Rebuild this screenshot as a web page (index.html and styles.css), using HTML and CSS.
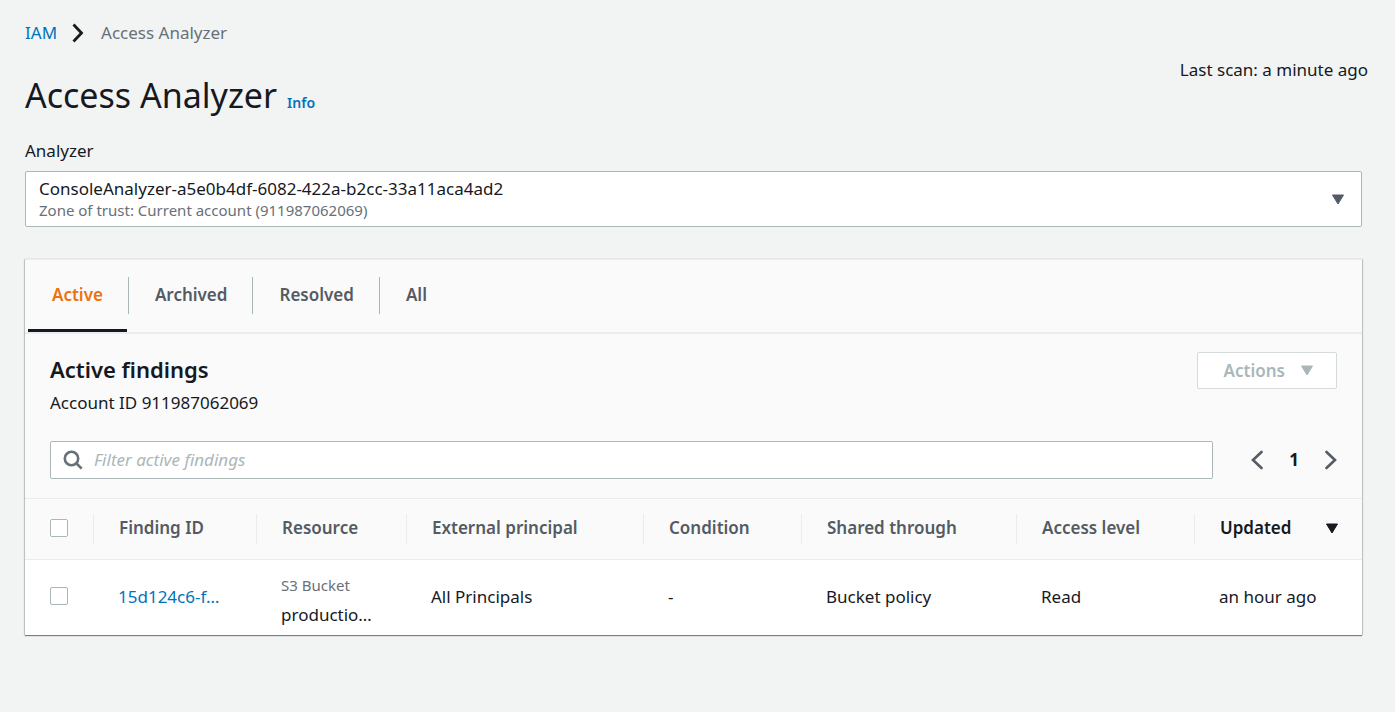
FILE: index.html
```html
<!DOCTYPE html>
<html lang="en">
<head>
<meta charset="utf-8">
<meta name="viewport" content="width=device-width, initial-scale=1">
<title>Access Analyzer</title>
<link rel="stylesheet" href="styles.css">
</head>
<body>
<main class="page">
  <header class="page-header">
    <div class="page-heading">
      <nav class="breadcrumb" aria-label="Breadcrumb">
        <a class="link" href="#iam">IAM</a>
        <svg class="breadcrumb-arrow" width="12" height="20" viewBox="0 0 12 20" aria-hidden="true"><path d="M1.500 1.500 9.500 10l-8 8.500" fill="none" stroke="#16191f" stroke-width="2.800"/></svg>
        <span aria-current="page">Access Analyzer</span>
      </nav>
      <div class="title-row">
        <h1 class="title">Access Analyzer</h1>
        <a class="info link" href="#info">Info</a>
      </div>
    </div>
    <p class="last-scan">Last scan: a minute ago</p>
  </header>

  <div class="content">
    <div class="field">
      <label class="field-label" for="analyzer">Analyzer</label>
      <div class="picker">
        <select class="picker-select" id="analyzer" aria-describedby="analyzer-zone">
          <option>ConsoleAnalyzer-a5e0b4df-6082-422a-b2cc-33a11aca4ad2</option>
        </select>
        <span class="picker-note" id="analyzer-zone">Zone of trust: Current account (911987062069)</span>
        <svg class="picker-caret" width="14" height="11" viewBox="0 0 14 11" aria-hidden="true"><path d="M1.500 1h11L7 10z" fill="#545b64" stroke="#545b64" stroke-linejoin="round"/></svg>
      </div>
    </div>

    <section class="panel">
      <div class="tabs" role="tablist">
        <div class="tab-item"><button class="tab tab-active" type="button" role="tab" aria-selected="true">Active</button></div>
        <div class="tab-item"><button class="tab" type="button" role="tab" aria-selected="false">Archived</button></div>
        <div class="tab-item"><button class="tab" type="button" role="tab" aria-selected="false">Resolved</button></div>
        <div class="tab-item"><button class="tab" type="button" role="tab" aria-selected="false">All</button></div>
      </div>

      <div class="panel-header">
        <div>
          <h2 class="panel-title">Active findings</h2>
          <p class="panel-note">Account ID 911987062069</p>
        </div>
        <button class="actions" type="button" disabled>
          Actions
          <svg width="14" height="11" viewBox="0 0 14 11" aria-hidden="true"><path d="M1.500 1h11L7 10z" fill="#aab7b8" stroke="#aab7b8" stroke-linejoin="round"/></svg>
        </button>
      </div>

      <div class="toolbar">
        <div class="search">
          <svg class="search-icon" width="20" height="20" viewBox="0 0 20 20" aria-hidden="true"><g fill="none" stroke="#687078" stroke-width="2.600"><circle cx="8.500" cy="8.500" r="6.700"/><path d="m13 13 5.700 5.700"/></g></svg>
          <input class="search-input" type="search" placeholder="Filter active findings" aria-label="Filter active findings">
        </div>
        <nav class="pager" aria-label="Pages">
          <button class="pager-button" type="button" aria-label="Previous page"><svg width="12" height="20" viewBox="0 0 12 20" aria-hidden="true"><path d="M10.500 2 2 10l8.500 8" fill="none" stroke="#545b64" stroke-width="2.600" stroke-linecap="round"/></svg></button>
          <span class="pager-current" aria-current="page">1</span>
          <button class="pager-button" type="button" aria-label="Next page"><svg width="12" height="20" viewBox="0 0 12 20" aria-hidden="true"><path d="M1.500 2 10 10l-8.500 8" fill="none" stroke="#545b64" stroke-width="2.600" stroke-linecap="round"/></svg></button>
        </nav>
      </div>

      <table class="findings">
        <colgroup>
          <col class="col-check"><col class="col-id"><col class="col-resource"><col class="col-principal"><col class="col-condition"><col class="col-shared"><col class="col-level"><col class="col-updated">
        </colgroup>
        <thead>
          <tr>
            <th class="check-cell"><input class="check" type="checkbox" aria-label="Select all findings"></th>
            <th scope="col">Finding ID</th>
            <th scope="col">Resource</th>
            <th scope="col">External principal</th>
            <th scope="col">Condition</th>
            <th scope="col">Shared through</th>
            <th scope="col">Access level</th>
            <th class="sorted" scope="col" aria-sort="descending">
              <div class="sort">Updated <svg width="14" height="11" viewBox="0 0 14 11" aria-hidden="true"><path d="M1.500 1h11L7 10z" fill="#16191f" stroke="#16191f" stroke-linejoin="round"/></svg></div>
            </th>
          </tr>
        </thead>
        <tbody>
          <tr>
            <td class="check-cell"><input class="check" type="checkbox" aria-label="Select finding 15d124c6"></td>
            <td><a class="link" href="#finding">15d124c6-f…</a></td>
            <td><div class="resource-type">S3 Bucket</div><div class="resource-name">productio…</div></td>
            <td>All Principals</td>
            <td>-</td>
            <td>Bucket policy</td>
            <td>Read</td>
            <td>an hour ago</td>
          </tr>
        </tbody>
      </table>
    </section>
  </div>
</main>
</body>
</html>
```
FILE: styles.css
```css
* {
  box-sizing: border-box;
}

body {
  margin: 0;
  background: #f2f4f4;
  color: #16191f;
  font: 17px/24px "Noto Sans", "Open Sans", sans-serif;
}

h1, h2, p {
  margin: 0;
}

button, input, select {
  font: inherit;
}

.link {
  color: #0073bb;
  text-decoration: none;
}

.page {
  padding: 21px 27px 24px 25px;
}

.page-header {
  display: flex;
  justify-content: space-between;
}

.breadcrumb {
  display: flex;
  align-items: center;
  color: #687078;
}

.breadcrumb-arrow {
  margin: 0 17px 0 15px;
}

.title-row {
  display: flex;
  align-items: baseline;
  gap: 10px;
  margin-top: 28px;
}

.title {
  font-size: 34px;
  line-height: 44px;
  font-weight: 400;
}

.info {
  font-size: 14px;
  font-weight: 600;
}

.last-scan {
  padding-top: 37px;
}

.content {
  padding-right: 6px;
}

.field {
  margin-top: 22px;
}

.field-label {
  display: block;
  margin-bottom: 8px;
}

.picker {
  position: relative;
}

.picker-select {
  display: block;
  width: 100%;
  height: 56px;
  padding: 0 48px 20px 13px;
  appearance: none;
  border: 1px solid #aab7b8;
  border-radius: 2px;
  background: #fff;
  color: #16191f;
}

.picker-note {
  position: absolute;
  left: 14px;
  bottom: 7px;
  color: #687078;
  font-size: 15px;
  line-height: 20px;
  pointer-events: none;
}

.picker-caret {
  position: absolute;
  right: 17px;
  top: 23px;
  pointer-events: none;
}

.panel {
  margin-top: 32px;
  background: #fff;
  border-top: 1px solid #eaeded;
  box-shadow: 0 1px 1px rgba(0, 28, 36, 0.5), 1px 0 1px rgba(0, 28, 36, 0.15), -1px 0 1px rgba(0, 28, 36, 0.15);
}

.tabs {
  display: flex;
  padding-left: 1px;
  background: #fafafa;
  border-bottom: 2px solid #eaeded;
}

.tab-item {
  padding: 0 2px;
  background: linear-gradient(#aab7b8, #aab7b8) right 17px / 1px 37px no-repeat;
}

.tab-item:last-child {
  background: none;
}

.tab {
  height: 72px;
  padding: 0 24px 2px;
  border: 0;
  border-top: 3px solid transparent;
  border-bottom: 3px solid transparent;
  background: none;
  color: #545b64;
  font-weight: 600;
}

.tab-active {
  border-bottom-color: #16191f;
  color: #ec7211;
}

.panel-header {
  display: flex;
  align-items: flex-start;
  justify-content: space-between;
  padding: 18px 25px 0;
  background: #fafafa;
}

.panel-title {
  font-size: 22px;
  line-height: 34px;
  font-weight: 600;
}

.panel-note {
  margin-top: 5px;
}

.actions {
  display: flex;
  align-items: center;
  gap: 15px;
  height: 37px;
  padding: 0 22px 0 26px;
  border: 1px solid #d5dbdb;
  border-radius: 2px;
  background: #fff;
  color: #aab7b8;
  font-weight: 600;
}

.toolbar {
  display: flex;
  align-items: center;
  gap: 38px;
  padding: 26px 25px 19px;
  background: #fafafa;
}

.search {
  display: flex;
  flex: 1;
  align-items: center;
  gap: 11px;
  height: 38px;
  padding: 0 12px;
  border: 1px solid #aab7b8;
  border-radius: 2px;
  background: #fff;
}

.search-input {
  flex: 1;
  min-width: 0;
  padding: 0;
  border: 0;
  outline: 0;
  background: none;
  color: #16191f;
}

.search-input::placeholder {
  color: #aab7b8;
  font-style: italic;
}

.pager {
  display: flex;
  align-items: center;
  gap: 26px;
}

.pager-button {
  display: flex;
  padding: 0;
  border: 0;
  background: none;
}

.pager-current {
  font-weight: 700;
}

.findings {
  width: 100%;
  table-layout: fixed;
  border-collapse: collapse;
  text-align: left;
}

.col-check { width: 68px; }
.col-id { width: 163px; }
.col-resource { width: 150px; }
.col-principal { width: 237px; }
.col-condition { width: 158px; }
.col-shared { width: 215px; }
.col-level { width: 178px; }
.col-updated { width: 168px; }

.findings th {
  height: 61px;
  padding: 0 0 2px 26px;
  border-top: 1px solid #eaeded;
  border-bottom: 1px solid #eaeded;
  background: linear-gradient(#eaeded, #eaeded) left center / 1px 30px no-repeat #fafafa;
  color: #545b64;
  font-weight: 600;
  white-space: nowrap;
}

.findings td {
  height: 75px;
  padding: 0 0 0 25px;
  white-space: nowrap;
}

.findings .check-cell {
  padding: 0 0 3px 25px;
  background-image: none;
}

.findings .sorted {
  padding-right: 23px;
  color: #16191f;
}

.sort {
  display: flex;
  align-items: center;
  justify-content: space-between;
}

.check {
  display: block;
  width: 18px;
  height: 18px;
  margin: 0;
  appearance: none;
  border: 1px solid #aab7b8;
  border-radius: 2px;
  background: #fff;
}

.check:checked {
  background: #0073bb;
}

.resource-type {
  padding-top: 6px;
  color: #687078;
  font-size: 15px;
}

.resource-name {
  padding-top: 6px;
}
```
